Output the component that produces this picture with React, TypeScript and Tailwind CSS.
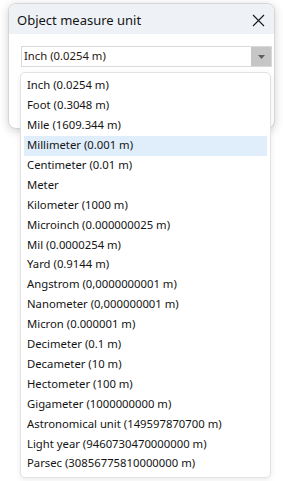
import React from "react";

const units = [
  "Inch (0.0254 m)",
  "Foot (0.3048 m)",
  "Mile (1609.344 m)",
  "Millimeter (0.001 m)",
  "Centimeter (0.01 m)",
  "Meter",
  "Kilometer (1000 m)",
  "Microinch (0.000000025 m)",
  "Mil (0.0000254 m)",
  "Yard (0.9144 m)",
  "Angstrom (0,0000000001 m)",
  "Nanometer (0,000000001 m)",
  "Micron (0.000001 m)",
  "Decimeter (0.1 m)",
  "Decameter (10 m)",
  "Hectometer (100 m)",
  "Gigameter (1000000000 m)",
  "Astronomical unit (149597870700 m)",
  "Light year (9460730470000000 m)",
  "Parsec (30856775810000000 m)",
];

export default function App() {
  return (
    <div
      className="relative w-[283px] h-[481px] bg-white overflow-hidden"
      style={{ fontFamily: '"Noto Sans", "Liberation Sans", sans-serif' }}
    >
      <div className="absolute left-[8px] top-[3px] w-[267px] h-[126px] rounded-[8px] border border-[#d6d6d6] bg-white shadow-[0_2px_10px_rgba(0,0,0,0.18)]">
        <div className="h-[30px] bg-[#eef2f7] rounded-t-[8px] flex items-center justify-between pl-[8px] pr-[9px] pt-[2px]">
          <span className="text-[13px] text-[#141414] leading-none">Object measure unit</span>
          <svg width="13" height="13" viewBox="0 0 13 13" className="text-[#1a1a1a]">
            <path d="M1 1 L12 12 M12 1 L1 12" stroke="currentColor" strokeWidth="1.1" fill="none" />
          </svg>
        </div>
        <div className="mt-[12px] ml-[12px] w-[251px] h-[21px] border border-[#d9d9d9] bg-white flex items-center">
          <span className="flex-1 pl-[2px] text-[11.3px] text-[#2a1810]">Inch (0.0254 m)</span>
          <div className="w-[20px] h-[19px] bg-[#c6c6c6] flex items-center justify-center">
            <svg width="7" height="4" viewBox="0 0 7 4">
              <path d="M0 0 L7 0 L3.5 4 Z" fill="#5f5f5f" />
            </svg>
          </div>
        </div>
      </div>

      <div className="absolute left-[20px] top-[72px] w-[251px] h-[406px] rounded-[5px] border border-[#e2e2e2] bg-white pt-[3px] shadow-[0_2px_6px_rgba(0,0,0,0.08)]">
        {units.map((u, i) => (
          <div
            key={u}
            className={
              "mx-[3px] h-[19.9px] px-[3px] flex items-center text-[11.3px] text-[#141414] whitespace-nowrap " +
              (i === 3 ? "bg-[#e0eefb]" : "")
            }
          >
            {u}
          </div>
        ))}
      </div>
    </div>
  );
}
